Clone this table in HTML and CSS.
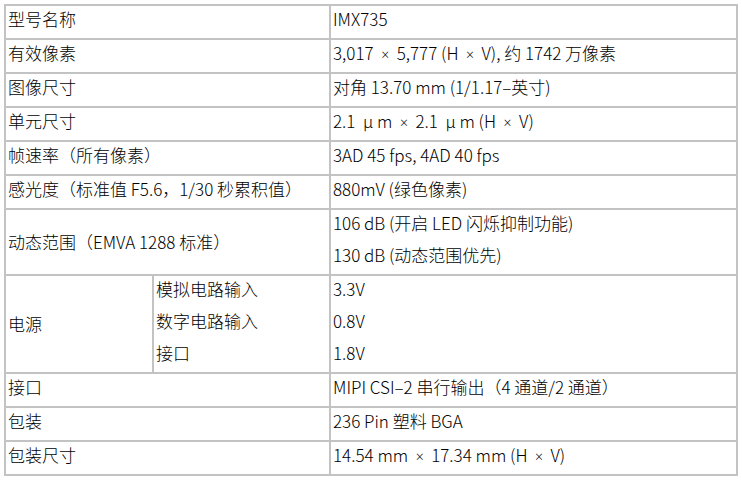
FILE: index.html
```html
<!DOCTYPE html>
<html lang="zh-CN">
<head>
<meta charset="utf-8">
<title>IMX735 规格</title>
<link rel="stylesheet" href="styles.css">
</head>
<body>
<table class="spec">
  <colgroup>
    <col class="c1"><col class="c2"><col class="c3">
  </colgroup>
  <tr><td colspan="2"><p>型号名称</p></td><td><p>IMX735</p></td></tr>
  <tr><td colspan="2"><p>有效像素</p></td><td><p>3,017 &nbsp;<span class="x">×</span>&nbsp; 5,777 (H &nbsp;<span class="x">×</span>&nbsp; V), 约 1742 万像素</p></td></tr>
  <tr><td colspan="2"><p>图像尺寸</p></td><td><p>对角 13.70 mm (1/1.17–英寸)</p></td></tr>
  <tr><td colspan="2"><p>单元尺寸</p></td><td><p>2.1 &nbsp;μ m &nbsp;<span class="x">×</span>&nbsp; 2.1 &nbsp;μ m (H &nbsp;<span class="x">×</span>&nbsp; V)</p></td></tr>
  <tr><td colspan="2"><p>帧速率（所有像素）</p></td><td><p>3AD 45 fps, 4AD 40 fps</p></td></tr>
  <tr><td colspan="2"><p>感光度（标准值 F5.6，1/30 秒累积值）</p></td><td><p>880mV (绿色像素)</p></td></tr>
  <tr><td colspan="2" class="mid"><p>动态范围（EMVA 1288 标准）</p></td><td><p>106 dB (开启 LED 闪烁抑制功能)</p><p>130 dB (动态范围优先)</p></td></tr>
  <tr><td class="mid"><p>电源</p></td><td class="sub"><p>模拟电路输入</p><p>数字电路输入</p><p>接口</p></td><td><p>3.3V</p><p>0.8V</p><p>1.8V</p></td></tr>
  <tr><td colspan="2"><p>接口</p></td><td><p>MIPI CSI–2 串行输出（4 通道/2 通道）</p></td></tr>
  <tr><td colspan="2"><p>包装</p></td><td><p>236 Pin 塑料 BGA</p></td></tr>
  <tr><td colspan="2"><p>包装尺寸</p></td><td><p>14.54 mm &nbsp;<span class="x">×</span>&nbsp; 17.34 mm (H &nbsp;<span class="x">×</span>&nbsp; V)</p></td></tr>
</table>
</body>
</html>
```
FILE: styles.css
```css
html, body {
  margin: 0;
  padding: 0;
  background: #ffffff;
}
body {
  padding: 4px 0 0 4px;
  font-family: "Noto Sans CJK SC", "Noto Sans", sans-serif;
  font-size: 17px;
  font-weight: 300;
  color: #000000;
}
.spec {
  border-collapse: collapse;
  width: 732px;
  table-layout: fixed;
}
.c1 { width: 148px; }
.c2 { width: 177px; }
.c3 { width: 407px; }
.spec td {
  border: 2px solid #c3c3c3;
  padding: 0 0 0 2px;
  vertical-align: top;
}
.spec td.mid {
  vertical-align: middle;
}
.spec p {
  margin: 0;
  height: 32px;
  line-height: 26px;
  white-space: nowrap;
}
.spec td.mid p {
  height: auto;
}
.x {
  font-family: "Open Sans", sans-serif;
  font-size: 14px;
}
```
